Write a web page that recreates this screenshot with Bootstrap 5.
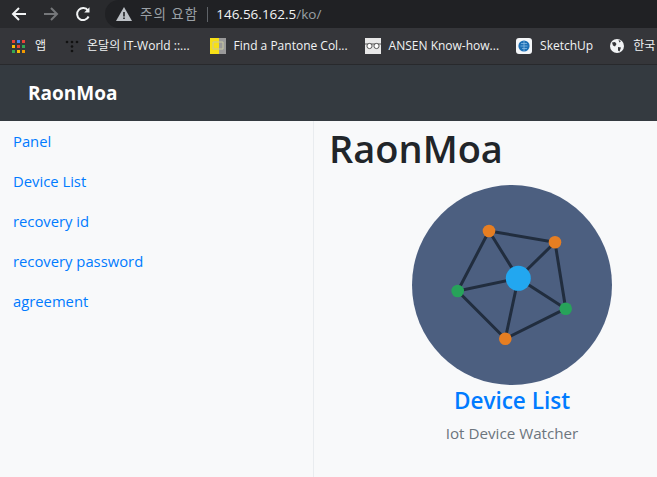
<!DOCTYPE html>
<html lang="ko">
<head>
  <meta charset="UTF-8" />
  <title>RaonMoa</title>
  <link href="https://cdn.jsdelivr.net/npm/bootstrap@5.3.0/dist/css/bootstrap.min.css" rel="stylesheet" />
  <style>
    html, body {
      height: 100%;
      overflow: hidden;
    }
    body {
      background: #f8f9fa;
      font-family: "Open Sans", "Noto Sans", "Noto Sans CJK KR", sans-serif;
    }
    .page-wrap {
      height: 477px;
    }
    .tab-bar {
      height: 28px;
      background: #292a2d;
    }
    .tool-btns {
      width: 105px;
      padding-left: 11px;
      gap: 16px;
    }
    .url-box {
      height: 28px;
      background: #202124;
      border-radius: 14px 0 0 14px;
      padding-left: 11px;
      font-size: 13.5px;
      color: #9aa0a6;
    }
    .url-warn {
      margin-left: 8px;
      letter-spacing: 1px;
    }
    .url-sep {
      width: 1px;
      height: 15px;
      background: #5f6368;
      margin: 0 8px 0 9px;
    }
    .url-host {
      color: #f1f3f4;
    }
    .bookmark-bar {
      height: 37px;
      background: #35363a;
      border-bottom: 1px solid #28292c;
      font-size: 12px;
      color: #f1f3f4;
      white-space: nowrap;
      overflow: hidden;
      padding-left: 12px;
    }
    .bm-item {
      gap: 8px;
      flex-shrink: 0;
      margin-right: 17px;
    }
    .site-bar {
      height: 56px;
      background: #343a40;
      padding: 1px 0 0 28px;
    }
    .site-brand {
      color: #fff;
      font-size: 19px;
      font-weight: 700;
      padding: 0;
      margin: 0;
    }
    .side-col {
      width: 314px;
      flex-shrink: 0;
      border-right: 1px solid #e9ecef;
    }
    .side-col .nav-link {
      padding: 8px 13px;
      color: #007bff;
      font-size: 14.8px;
      line-height: 24px;
    }
    .main-col {
      padding-left: 15px;
      min-width: 0;
    }
    .main-title {
      font-size: 38px;
      font-weight: 600;
      color: #212529;
      line-height: 52px;
      margin: 1px 0 11px;
    }
    .device-box {
      width: 290px;
      margin-left: 38px;
      text-align: center;
    }
    .device-pic {
      display: block;
      margin: 0 auto;
    }
    .device-name {
      color: #007bff;
      font-size: 22.5px;
      font-weight: 600;
      line-height: 32px;
      text-decoration: none;
      display: block;
    }
    .device-sub {
      color: #6c757d;
      font-size: 15.2px;
      line-height: 22px;
      margin-top: 5px;
    }
  </style>
</head>
<body>
  <div class="page-wrap d-flex flex-column">
    <div class="tab-bar d-flex align-items-center">
      <div class="tool-btns d-flex align-items-center flex-shrink-0">
        <svg width="16" height="16" viewBox="0 0 16 16" fill="none" stroke="#f1f3f4" stroke-width="2"><path d="M15 8H2M8 2 2 8l6 6"/></svg>
        <svg width="16" height="16" viewBox="0 0 16 16" fill="none" stroke="#75777a" stroke-width="2"><path d="M1 8h13M8 2l6 6-6 6"/></svg>
        <svg width="16" height="16" viewBox="0 0 16 16" fill="none" stroke="#f1f3f4" stroke-width="2"><path d="M13.6 10.5A6 6 0 1 1 13 4.6"/><path d="M14.5 1.2v5.300H9.200z" fill="#f1f3f4" stroke="none"/></svg>
      </div>
      <div class="url-box d-flex align-items-center flex-grow-1">
        <svg width="16" height="14" viewBox="0 0 16 14"><path d="M8 0 16 14H0z" fill="#bdc1c6"/><path d="M7.2 5h1.600v4.500H7.200zM7.200 10.400h1.600V12H7.200z" fill="#202124"/></svg>
        <span class="url-warn">주의 요함</span>
        <span class="url-sep"></span>
        <span><span class="url-host">146.56.162.5</span>/ko/</span>
      </div>
    </div>

    <div class="bookmark-bar d-flex align-items-center">
      <div class="bm-item d-flex align-items-center" style="margin-right:19px">
        <svg width="13" height="13" viewBox="0 0 13 13">
          <path d="M0 0h3v3H0z" fill="#ea4335"/><path d="M5 0h3v3H5z" fill="#4285f4"/><path d="M10 0h3v3h-3z" fill="#ea4335"/>
          <path d="M0 5h3v3H0z" fill="#fbbc04"/><path d="M5 5h3v3H5z" fill="#ea4335"/><path d="M10 5h3v3h-3z" fill="#34a853"/>
          <path d="M0 10h3v3H0z" fill="#34a853"/><path d="M5 10h3v3H5z" fill="#fbbc04"/><path d="M10 10h3v3h-3z" fill="#f29900"/>
        </svg>
        <span style="margin-left:2px">앱</span>
      </div>
      <div class="bm-item d-flex align-items-center" style="margin-right:20px">
        <svg width="14" height="14" viewBox="0 0 14 14" fill="#111">
          <circle cx="2" cy="3" r="1.3"/><circle cx="7" cy="3" r="1.3"/><circle cx="12" cy="3" r="1.3"/><circle cx="7" cy="7.500" r="1.3"/><circle cx="7" cy="12" r="1.3"/>
        </svg>
        <span>온달의 IT-World ::...</span>
      </div>
      <div class="bm-item d-flex align-items-center">
        <svg width="16" height="16" viewBox="0 0 16 16"><path d="M0 0h9v16H0z" fill="#f7e017"/><path d="M9 0h7v16H9z" fill="#9a9a9a"/><path d="M3 4h10v7H3z" fill="none" stroke="#c9c9a0" stroke-width="1"/></svg>
        <span>Find a Pantone Col...</span>
      </div>
      <div class="bm-item d-flex align-items-center">
        <svg width="16" height="16" viewBox="0 0 16 16"><path d="M0 0h16v16H0z" fill="#e8e8e8"/><path d="M0 6h16" stroke="#555"/><circle cx="4.500" cy="8" r="2.600" fill="#fff" stroke="#555"/><circle cx="11.500" cy="8" r="2.600" fill="#fff" stroke="#555"/></svg>
        <span>ANSEN Know-how...</span>
      </div>
      <div class="bm-item d-flex align-items-center">
        <svg width="16" height="16" viewBox="0 0 16 16"><rect width="16" height="16" rx="3" fill="#f4f6f8"/><circle cx="8" cy="8" r="5.600" fill="#1c6fb5"/><path d="M5 5.500h6M4.500 8h7M6 10.500h5M8 3v10" stroke="#8fc1e8" stroke-width=".7"/></svg>
        <span>SketchUp</span>
      </div>
      <div class="bm-item d-flex align-items-center" style="margin-right:0;gap:9px">
        <svg width="14" height="14" viewBox="0 0 14 14"><circle cx="7" cy="7" r="7" fill="#f1f3f4"/><path d="M2 3.500 5 3l1.500 2L5 7.500 3 6.500zM8 8l3 .5-1.500 4-1.500-1zM8.500 1l2.500 1-1.500 1.500z" fill="#35363a"/></svg>
        <span>한국</span>
      </div>
    </div>

    <nav class="navbar site-bar flex-shrink-0">
      <a class="navbar-brand site-brand" href="#">RaonMoa</a>
    </nav>

    <div class="d-flex flex-grow-1">
      <div class="side-col">
        <ul class="nav flex-column">
          <li class="nav-item"><a class="nav-link" href="#">Panel</a></li>
          <li class="nav-item"><a class="nav-link" href="#">Device List</a></li>
          <li class="nav-item"><a class="nav-link" href="#">recovery id</a></li>
          <li class="nav-item"><a class="nav-link" href="#">recovery password</a></li>
          <li class="nav-item"><a class="nav-link" href="#">agreement</a></li>
        </ul>
      </div>
      <div class="main-col flex-grow-1">
        <h1 class="main-title">RaonMoa</h1>
        <div class="device-box">
          <svg class="device-pic" width="200" height="200" viewBox="0 0 200 200">
            <circle cx="100" cy="100" r="100" fill="#4c5f80"/>
            <g stroke="#212d3e" stroke-width="3" fill="none">
              <path d="M77 46 143 57.300 153.700 123.700 93.300 153.700 45.700 106z"/>
              <path d="M106.300 93.300 77 46M106.300 93.300 143 57.300M106.300 93.300 153.700 123.700M106.300 93.300 93.300 153.700M106.300 93.300 45.700 106"/>
            </g>
            <circle cx="106.300" cy="93.300" r="12.500" fill="#22a7f0"/>
            <circle cx="77" cy="46" r="6.300" fill="#e67e22"/>
            <circle cx="143" cy="57.300" r="6.300" fill="#e67e22"/>
            <circle cx="93.300" cy="153.700" r="6.300" fill="#e67e22"/>
            <circle cx="153.700" cy="123.700" r="6.300" fill="#27a35a"/>
            <circle cx="45.700" cy="106" r="6.300" fill="#27a35a"/>
          </svg>
          <a class="device-name" href="#">Device List</a>
          <div class="device-sub">Iot Device Watcher</div>
        </div>
      </div>
    </div>
  </div>
  <script src="https://cdn.jsdelivr.net/npm/bootstrap@5.3.0/dist/js/bootstrap.bundle.min.js"></script>
</body>
</html>
